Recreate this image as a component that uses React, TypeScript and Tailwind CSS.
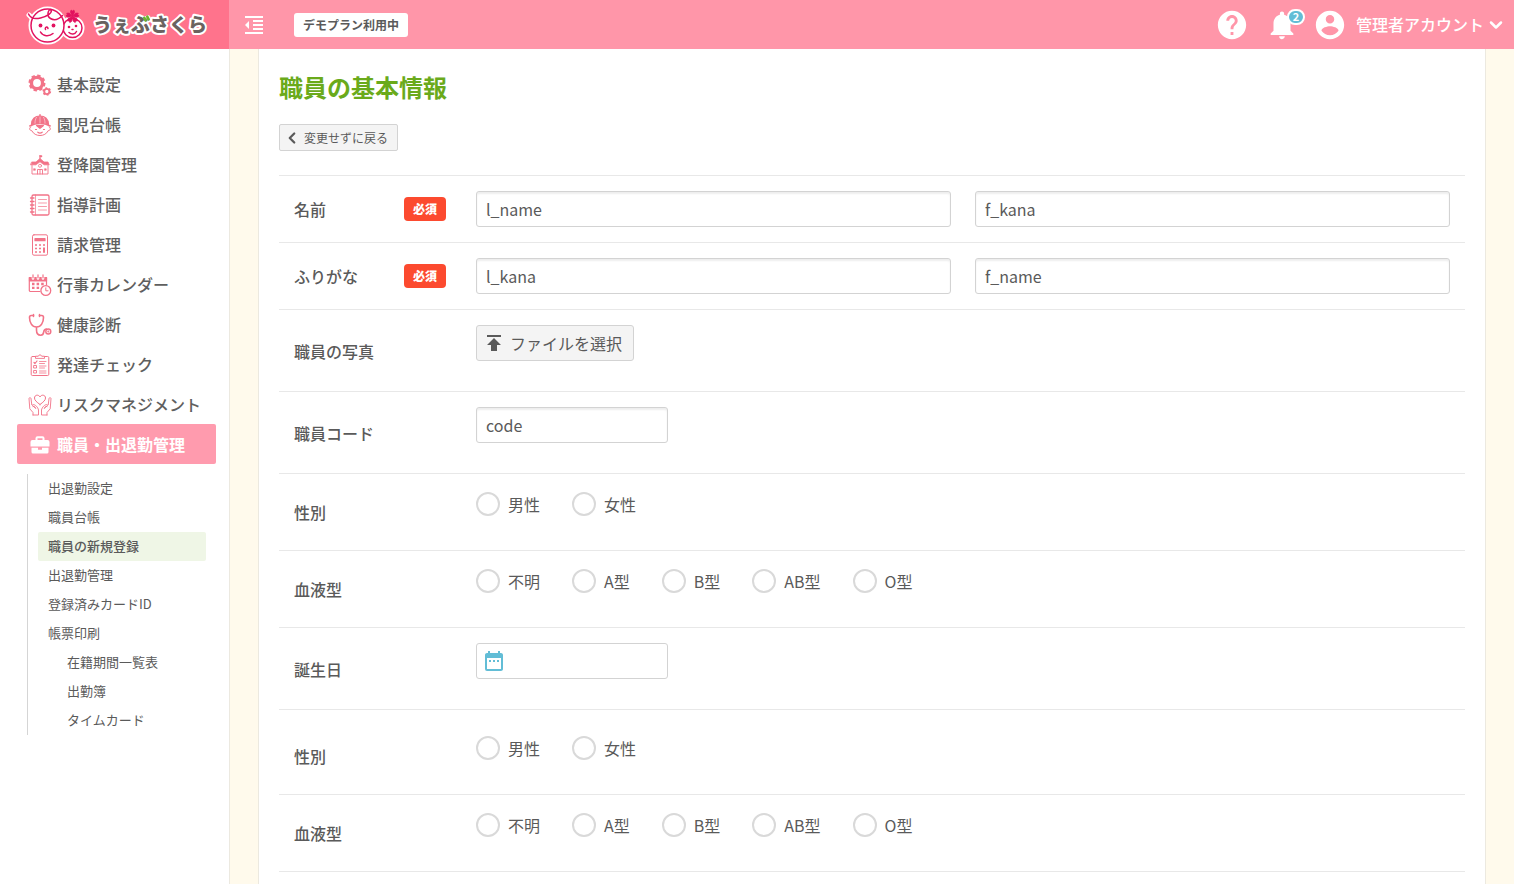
import type { ReactNode } from "react";
import { ChevronDown, ChevronLeft } from "lucide-react";
import { MdDateRange, MdFormatIndentDecrease, MdHelp, MdNotifications, MdPublish } from "react-icons/md";

function Icon({ children }: { children: ReactNode }) {
  return (
    <svg
      viewBox="0 0 24 24"
      className="mt-[2px] size-6 shrink-0"
      fill="none"
      stroke="currentColor"
      strokeWidth="1.2"
      strokeLinecap="round"
      strokeLinejoin="round"
      aria-hidden="true"
    >
      {children}
    </svg>
  );
}

function GearsIcon() {
  return (
    <Icon>
      <circle cx="9" cy="10" r="5.600" strokeWidth="3.400" />
      <circle cx="9" cy="10" r="7.200" strokeWidth="2.600" strokeLinecap="butt" strokeDasharray="3.300 2.350" />
      <circle cx="18.800" cy="18.500" r="2.600" strokeWidth="1.900" />
      <circle cx="18.800" cy="18.500" r="3.600" strokeWidth="1.500" strokeLinecap="butt" strokeDasharray="1.800 1.970" />
    </Icon>
  );
}

function ChildIcon() {
  return (
    <Icon>
      <path d="M3.500 11.500C3.500 6 7 3 12 3s8.500 3 8.500 8.500c-5-2-12-2-17 0z" fill="currentColor" />
      <path d="M1.800 13c6-3.200 14.400-3.200 20.400 0" strokeWidth="1.500" />
      <path d="M12 1.800V4" strokeWidth="1.500" />
      <path d="M12 4v6M8.500 4.300C7.300 6 7 8 7 10.200M15.500 4.300c1.200 1.700 1.500 3.700 1.500 5.900" stroke="#fff" strokeWidth=".5" />
      <path d="M2.800 14c-1.800.7-1.600 3.500 1 3.700C5.500 21 8.500 22.500 12 22.500s6.500-1.500 8.200-4.800c2.600-.2 2.800-3 1-3.700" strokeWidth="1" />
      <path d="M8.500 12.500h7L12 15.300z" fill="currentColor" />
      <path d="M7.500 16.500h1M15.500 16.500h1M9.800 19.200c1.300 1 3.100 1 4.400 0" />
    </Icon>
  );
}

function SchoolIcon() {
  return (
    <Icon>
      <path d="M4 9h4l4-3.500L16 9h4l1.200 2.800h-5L12 8.800l-4.200 3h-5z" fill="currentColor" strokeWidth=".8" />
      <path d="M12 5.500V2.500" />
      <path d="M12 2.500h2V4h-2z" fill="currentColor" strokeWidth=".4" />
      <path d="M4 12.500V21h16v-8.500" strokeWidth=".9" />
      <circle cx="12" cy="12.800" r="1.500" strokeWidth=".8" />
      <path d="M9.500 21v-4.500h5V21M12 16.500V21" strokeWidth=".9" />
      <path d="M5.800 15.800h1.500v1.500H5.800zM16.700 15.800h1.500v1.500h-1.500z" fill="currentColor" strokeWidth=".6" />
    </Icon>
  );
}

function NotebookIcon() {
  return (
    <Icon>
      <rect x="4" y="2" width="17" height="20" rx="1.500" strokeWidth="1.300" />
      <path d="M7.500 2v20" strokeWidth=".7" />
      <path d="M2.500 5H6M2.500 8.500H6M2.500 12H6M2.500 15.500H6M2.500 19H6" strokeWidth="1.300" />
      <path d="M10.500 6.500h8M10.500 10h8M10.500 13.500h8M10.500 17h8" strokeWidth=".7" />
    </Icon>
  );
}

function CalculatorIcon() {
  return (
    <Icon>
      <rect x="4.500" y="1.800" width="15" height="20.400" rx="1.500" strokeWidth="1" />
      <path d="M7 5.700h10v2H7z" fill="currentColor" />
      <path d="M7 12h2M11 12h2M15 12h2M7 15.500h2M11 15.500h2M7 19h2M11 19h2" strokeWidth="1.700" strokeLinecap="butt" />
      <path d="M16 14.600v5.200" strokeWidth="2" strokeLinecap="butt" />
    </Icon>
  );
}

function ScheduleIcon() {
  return (
    <Icon>
      <path d="M12 18.500H2.500a1.200 1.200 0 0 1-1.200-1.200V4.500h17.200V12" />
      <path d="M1.500 4.500h17V8h-17z" fill="currentColor" />
      <path d="M5 1.500v4M10 1.500v4M15 1.500v4" stroke="#fff" strokeWidth="2.600" />
      <path d="M5 1.800v3M10 1.800v3M15 1.800v3" />
      <path d="M4 11h2.500M8.600 11h2.500M13.200 11h2.500M4 14.800h2.500M8.600 14.800h2.500" strokeWidth="2.300" strokeLinecap="butt" />
      <circle cx="17.800" cy="17.500" r="4.900" fill="#fff" strokeWidth="1.300" />
      <path d="M17.800 14.800v3h2.200" strokeWidth="1" />
    </Icon>
  );
}

function StethoscopeIcon() {
  return (
    <Icon>
      <path
        d="M5.500 2.500H3.200c-1.200 0-1.700.8-1.700 2C1.500 9.500 4 14 8.500 14s7-4.500 7-9.500c0-1.200-.5-2-1.700-2h-2.300M8.500 14v3c0 3 1.500 5.200 4.200 5.200 5 0 1-6.200 5.800-6.200"
        strokeWidth="1.600"
      />
      <path d="M5.500 1.500v2M11.500 1.500v2" strokeWidth="1.500" />
      <circle cx="20.300" cy="18.500" r="2.500" strokeWidth="1.400" />
      <circle cx="20.300" cy="18.500" r=".4" />
    </Icon>
  );
}

function ChecklistIcon() {
  return (
    <Icon>
      <rect x="3.200" y="3.500" width="17.600" height="19" rx="1.200" strokeWidth="1" />
      <path d="M7.500 5V3.200h2.800c.4-1.800 3-1.800 3.400 0h2.800V5z" fill="#fff" strokeWidth=".9" />
      <path d="M6 9.500l1 1 2-2.500" />
      <path d="M6 12.500h2.500V15H6zM6 17.500h2.500V20H6z" strokeWidth=".9" />
      <path d="M11.500 8.500H18M11.500 10.500h5M11.500 13H18M11.500 15h5M11.500 18H18M11.500 20H18" strokeWidth=".8" />
    </Icon>
  );
}

function HandsHeartIcon() {
  return (
    <Icon>
      <path d="M12 11.500C8.500 9 6.500 7.200 6.500 5c0-3.300 4.200-3.800 5.500-1 1.300-2.800 5.500-2.300 5.500 1 0 2.200-2 4-5.500 6.500z" strokeWidth="1" />
      <path d="M5 22v-2.500L1.800 15.800 1 5.500c0-1 1.800-1.200 2 0l.8 6.500 4 3.500c-1-2.700-2.300-2.300-2.800-2M5 11.500c2.500-.2 5 3 5.500 5.500v5H5" strokeWidth=".9" />
      <path d="M19 22v-2.500l3.200-3.700.8-10.300c0-1-1.800-1.200-2 0l-.8 6.500-4 3.500c1-2.700 2.300-2.300 2.800-2M19 11.500c-2.500-.2-5 3-5.500 5.500v5H19" strokeWidth=".9" />
    </Icon>
  );
}

function BriefcaseIcon() {
  return (
    <Icon>
      <path d="M8.500 7.500V5.300c0-.7.400-1 1-1h5c.6 0 1 .3 1 1v2.200" strokeWidth="2" />
      <path d="M4.500 7h15a2 2 0 0 1 2 2v4.500h-19V9a2 2 0 0 1 2-2zM3.500 14.800H10v2h4v-2h6.500V19a1.500 1.500 0 0 1-1.500 1.500H5A1.500 1.500 0 0 1 3.500 19z" fill="currentColor" stroke="none" />
    </Icon>
  );
}

function AccountIcon() {
  return (
    <svg viewBox="0 0 24 24" className="size-[34px]" fill="currentColor" aria-hidden="true">
      <path d="M12 2C6.480 2 2 6.480 2 12s4.480 10 10 10 10-4.480 10-10S17.520 2 12 2zm0 3c1.660 0 3 1.340 3 3s-1.340 3-3 3-3-1.340-3-3 1.340-3 3-3zm0 14.200c-2.500 0-4.710-1.280-6-3.220.030-1.990 4-3.080 6-3.080 1.990 0 5.970 1.090 6 3.080-1.290 1.940-3.500 3.220-6 3.220z" />
    </svg>
  );
}

const petals = [
  "rotate(0 46.500 13.500)",
  "rotate(72 46.500 13.500)",
  "rotate(144 46.500 13.500)",
  "rotate(216 46.500 13.500)",
  "rotate(288 46.500 13.500)",
];

function Logo() {
  return (
    <svg viewBox="0 0 184 44" className="h-11 w-46" role="img" aria-label="うぇぶさくら">
      <g stroke="#fff" strokeWidth="5" fill="#fff" strokeLinejoin="round" strokeLinecap="round">
        <circle cx="21.500" cy="22.500" r="16.500" />
        <circle cx="46.500" cy="25" r="9.500" />
        <path d="M3 12l5 5" />
      </g>
      <g fill="none" stroke="#e2125f" strokeWidth="1.500" strokeLinecap="round">
        <circle cx="46.500" cy="25" r="9.500" fill="#fff" />
        <circle cx="21.500" cy="22.500" r="16.500" fill="#fff" />
        <path d="M2.500 11c2 4.500 6 5.500 12 4 8-2 12-5.500 10.500-8-2-2-5.500 5.500-.5 8.500 4.500 2.700 9.500-.5 12-3" />
        <path d="M14.500 29c2.500 4.500 8.500 5 12.500 1.500M19.500 26.500c-1-2.500 2-3.500 2.500-1M43 29.500c2.500 2.500 6 2 7.500-1M46 26.500h1" />
      </g>
      <g fill="#e2125f">
        <circle cx="14.500" cy="22.500" r="1.900" />
        <circle cx="27.500" cy="22.500" r="1.900" />
        <circle cx="43" cy="24" r="1.300" />
        <circle cx="50" cy="23" r="1.300" />
        {petals.map((transform) => (
          <path
            key={transform}
            d="M46.500 13.500l-2.200-4.200.8-2.300 1.400 1 1.400-1 .8 2.300z"
            transform={transform}
            stroke="#e2125f"
            strokeWidth=".7"
            strokeLinejoin="round"
          />
        ))}
      </g>
      <text
        x="67"
        y="29"
        fontSize="19"
        className="font-['Noto_Sans_CJK_JP',sans-serif] font-black"
        fill="#6b625f"
        stroke="#fff"
        strokeWidth="4"
        strokeLinejoin="round"
        paintOrder="stroke"
      >
        うぇぶさくら
      </text>
      <path d="M118.300 14.800l1.200 2.600M121.300 13.600l1.200 2.600" stroke="#6cb52d" strokeWidth="2.600" strokeLinecap="round" />
    </svg>
  );
}

const menu = [
  { label: "基本設定", icon: <GearsIcon /> },
  { label: "園児台帳", icon: <ChildIcon /> },
  { label: "登降園管理", icon: <SchoolIcon /> },
  { label: "指導計画", icon: <NotebookIcon /> },
  { label: "請求管理", icon: <CalculatorIcon /> },
  { label: "行事カレンダー", icon: <ScheduleIcon /> },
  { label: "健康診断", icon: <StethoscopeIcon /> },
  { label: "発達チェック", icon: <ChecklistIcon /> },
  { label: "リスクマネジメント", icon: <HandsHeartIcon /> },
  { label: "職員・出退勤管理", icon: <BriefcaseIcon />, active: true },
];

const submenu = [
  { label: "出退勤設定" },
  { label: "職員台帳" },
  { label: "職員の新規登録", active: true },
  { label: "出退勤管理" },
  { label: "登録済みカードID" },
  { label: "帳票印刷" },
  { label: "在籍期間一覧表", nested: true },
  { label: "出勤簿", nested: true },
  { label: "タイムカード", nested: true },
];

const genders = ["男性", "女性"];
const bloodTypes = ["不明", "A型", "B型", "AB型", "O型"];

function Header() {
  return (
    <header className="flex h-[49px] bg-[#ff96a9] text-white">
      <a href="#home" className="flex w-[229px] shrink-0 items-center bg-[#ff738c] pl-[26px]">
        <Logo />
      </a>
      <div className="flex flex-1 items-center pr-2 pl-[13px]">
        <button type="button" aria-label="メニューを閉じる">
          <MdFormatIndentDecrease className="size-6" />
        </button>
        <span className="ml-7 rounded-[3px] bg-white px-[9px] text-xs leading-6 font-bold text-[#5a5a5a]">デモプラン利用中</span>
        <div className="ml-auto flex items-center">
          <button type="button" aria-label="ヘルプ">
            <MdHelp className="size-[34px]" />
          </button>
          <button type="button" aria-label="お知らせ" className="relative ml-4">
            <MdNotifications className="size-[34px]" />
            <span className="absolute top-px -right-[6px] flex h-4 w-[18px] items-center justify-center rounded-full border-2 border-white bg-[#62bdd6] text-[11px] leading-none font-bold">
              2
            </span>
          </button>
          <button type="button" className="ml-[14px] flex items-center text-base leading-[22px] font-medium">
            <AccountIcon />
            <span className="ml-[9px] pb-[2px]">管理者アカウント</span>
            <ChevronDown className="ml-[2px] size-5" strokeWidth={3} />
          </button>
        </div>
      </div>
    </header>
  );
}

function Sidebar() {
  return (
    <nav className="w-[230px] shrink-0 border-r border-[#ece9e0] pt-[15px] pr-[13px] pl-[17px]">
      <ul>
        {menu.map((item) => (
          <li key={item.label}>
            <a
              href="#menu"
              className={
                item.active
                  ? "flex h-10 items-center gap-[5px] rounded-[2px] bg-[#ff9bae] pl-[11px] font-bold whitespace-nowrap text-white"
                  : "flex h-10 items-center gap-[5px] pl-[11px] font-medium whitespace-nowrap text-[#f27388]"
              }
            >
              {item.icon}
              <span className={item.active ? "" : "text-[#5f5f5f]"}>{item.label}</span>
            </a>
          </li>
        ))}
      </ul>
      <ul className="mt-[10px] ml-[10px] border-l border-[#d5d5d5] px-[10px] text-[13px] leading-[27px] text-[#5a5a5a]">
        {submenu.map((item) => (
          <li key={item.label}>
            <a
              href="#submenu"
              className={
                item.active
                  ? "block rounded-[2px] bg-[#eff6e6] pb-[2px] pl-[10px] font-medium"
                  : item.nested
                    ? "block pb-[2px] pl-[29px]"
                    : "block pb-[2px] pl-[10px]"
              }
            >
              {item.label}
            </a>
          </li>
        ))}
      </ul>
    </nav>
  );
}

interface RowProps {
  id: string;
  label: string;
  required?: boolean;
  group?: boolean;
  className?: string;
  children: ReactNode;
}

function Row({ id, label, required, group, className = "", children }: RowProps) {
  return (
    <div className={`flex gap-[30px] border-t border-[#e8e8e8] pr-[15px] ${className}`}>
      <div className="flex w-[167px] shrink-0 items-center justify-between pl-[15px] font-medium">
        {group ? <span id={id}>{label}</span> : <label htmlFor={id}>{label}</label>}
        {required && <span className="rounded-[4px] bg-[#fc4a2f] px-[9px] text-xs leading-6 font-black text-white">必須</span>}
      </div>
      {children}
    </div>
  );
}

const inputClass =
  "h-9 min-w-0 rounded-[3px] border border-[#d3d3d3] bg-white px-[9px] text-base shadow-[inset_0_2px_2px_rgba(0,0,0,0.07)] outline-none focus:border-[#62bdd6]";

function NameRow({ id, label, first, second }: { id: string; label: string; first: string; second: string }) {
  return (
    <Row id={id} label={label} required>
      <div className="grid flex-1 grid-cols-2 gap-6 py-[15px]">
        <input id={id} type="text" defaultValue={first} className={inputClass} />
        <input type="text" aria-label={`${label} 2`} defaultValue={second} className={inputClass} />
      </div>
    </Row>
  );
}

function RadioRow({ id, label, options, className }: { id: string; label: string; options: string[]; className?: string }) {
  return (
    <Row id={id} label={label} group className={className}>
      <div role="radiogroup" aria-labelledby={id} className="flex gap-8 pt-[18px] pb-[34px]">
        {options.map((option) => (
          <label key={option} className="flex h-6 items-center gap-2">
            <input
              type="radio"
              name={id}
              value={option}
              className="size-6 appearance-none rounded-full border-2 border-[#d9d9d9] bg-white checked:border-8 checked:border-[#62bdd6]"
            />
            {option}
          </label>
        ))}
      </div>
    </Row>
  );
}

export default function App() {
  return (
    <div className="flex min-h-screen flex-col bg-white font-['Noto_Sans_CJK_JP',sans-serif] text-base text-[#5a5a5a]">
      <Header />
      <div className="flex flex-1">
        <Sidebar />
        <div className="flex flex-1 bg-[#fffaec] px-7">
          <main className="flex-1 border-x border-[#ece9e0] bg-white px-5 pt-5">
            <h1 className="text-2xl leading-9 font-bold text-[#6aaa1b]">職員の基本情報</h1>
            <button
              type="button"
              className="mt-[19px] flex h-[27px] items-center gap-[3px] rounded-[2px] border border-[#d3d3d3] bg-[#f4f4f4] pr-[9px] pl-[3px] text-xs"
            >
              <ChevronLeft className="size-[18px]" strokeWidth={3} />
              変更せずに戻る
            </button>
            <form className="mt-6 border-b border-[#e8e8e8]">
              <NameRow id="name" label="名前" first="l_name" second="f_kana" />
              <NameRow id="kana" label="ふりがな" first="l_kana" second="f_name" />
              <Row id="photo" label="職員の写真">
                <div className="pt-[15px] pb-[30px]">
                  <button
                    id="photo"
                    type="button"
                    className="flex h-9 items-center gap-1 rounded-[3px] border border-[#d3d3d3] bg-[#f4f4f4] pr-[11px] pl-[5px]"
                  >
                    <MdPublish className="size-6" />
                    ファイルを選択
                  </button>
                </div>
              </Row>
              <Row id="code" label="職員コード">
                <div className="pt-[15px] pb-[30px]">
                  <input id="code" type="text" defaultValue="code" className={`block w-48 ${inputClass}`} />
                </div>
              </Row>
              <RadioRow id="gender" label="性別" options={genders} />
              <RadioRow id="blood" label="血液型" options={bloodTypes} />
              <Row id="birthday" label="誕生日">
                <div className="pt-[15px] pb-[30px]">
                  <div className="flex h-9 w-48 items-center rounded-[3px] border border-[#d3d3d3] pl-[5px]">
                    <MdDateRange className="size-6 shrink-0 text-[#62bdd6]" />
                    <input id="birthday" type="text" className="h-full min-w-0 flex-1 px-1 outline-none" />
                  </div>
                </div>
              </Row>
              <RadioRow id="gender-2" label="性別" options={genders} className="pt-2" />
              <RadioRow id="blood-2" label="血液型" options={bloodTypes} />
            </form>
          </main>
        </div>
      </div>
    </div>
  );
}
